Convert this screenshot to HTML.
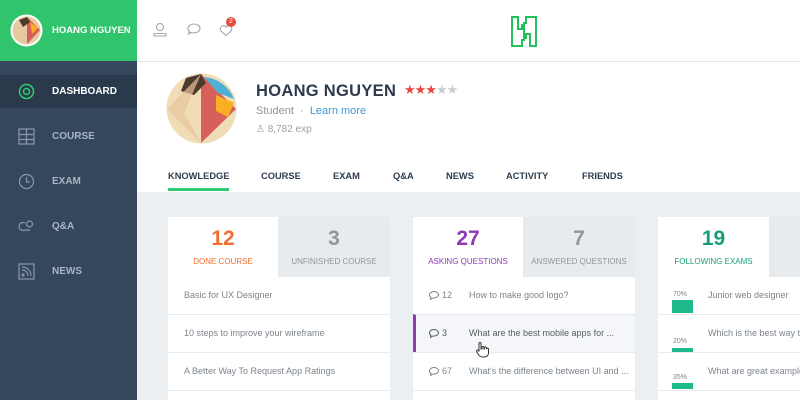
<!DOCTYPE html>
<html style="overflow:hidden;width:800px;height:400px"><head><meta charset="utf-8"><style>
*{margin:0;padding:0;box-sizing:border-box}
body{width:800px;height:400px;overflow:hidden;background:#eceff1;font-family:"Liberation Sans",sans-serif;position:relative}
.abs{position:absolute}
#side{left:0;top:0;width:137px;height:400px;background:#34475d}
#sh{left:0;top:0;width:137px;height:61px;background:#30c56c}
.nav{position:absolute;left:0;width:137px;height:33px;color:#a9b4c0;font-size:10px;font-weight:bold;line-height:33px;padding-left:52px}
.nav svg{position:absolute;left:18px;top:8px}
#top{left:137px;top:0;width:663px;height:62px;background:#fff;border-bottom:1px solid #e4e7ea}
#prof{left:137px;top:62px;width:663px;height:130px;background:#fff}
.tab{position:absolute;top:171px;font-size:9.3px;font-weight:bold;color:#2e3d4f}
.card{position:absolute;top:217px;width:222px;height:183px;background:#fff;overflow:hidden}
.th{position:absolute;top:0;height:60px;text-align:center}
.th b{display:block;font-size:21px;margin-top:10px}
.th span{display:block;font-size:8px;margin-top:6px}
.in{background:#e8ebed;color:#8e979f}
.row{position:absolute;left:0;width:100%;height:38px;border-top:1px solid #e8ebed;font-size:9px;color:#7c848c;line-height:36px;white-space:nowrap;overflow:hidden}
.last{border-bottom:1px solid #e8ebed;height:39px}
.c{display:inline-block;width:40px}
.c svg{vertical-align:-2px;margin-right:3px}
</style></head><body>
<div id="side" class="abs"></div>
<div id="sh" class="abs">
<svg class="abs" style="left:10px;top:14px" width="33" height="33" viewBox="0 0 33 33"><circle cx="16.5" cy="16.5" r="16" fill="#fff"/><circle cx="16.5" cy="16.5" r="14" fill="#e7c9a0"/><path d="M17 3 L30 16 L17 30 Z" fill="#d95a58"/><path d="M20 8 L28 14 L22 20 Z" fill="#f6b021"/><path d="M9 6 L17 3 L20 8 L13 13Z" fill="#4d3a2e"/></svg>
<div class="abs" style="left:52px;top:25px;color:#fff;font-size:9.5px;font-weight:bold">HOANG NGUYEN</div></div>
<div class="abs" style="left:0;top:75px;width:137px;height:33px;background:#2a394b"></div>
<div class="nav" style="top:75px;color:#fff"><svg width="17" height="17" viewBox="0 0 17 17"><circle cx="8.5" cy="8.5" r="7" fill="none" stroke="#2ecc71" stroke-width="1.5"/><circle cx="8.5" cy="8.5" r="3" fill="none" stroke="#2ecc71" stroke-width="1.5"/></svg>DASHBOARD</div>
<div class="nav" style="top:120px"><svg width="17" height="17" viewBox="0 0 17 17" fill="none" stroke="#8b98a7" stroke-width="1.2"><rect x="1" y="1" width="15" height="15"/><path d="M1 6.5h15M1 11.5h15M8.5 1v15"/></svg>COURSE</div>
<div class="nav" style="top:165px"><svg width="17" height="17" viewBox="0 0 17 17" fill="none" stroke="#8b98a7" stroke-width="1.2"><circle cx="8.5" cy="8.5" r="7"/><path d="M8.5 4v5h3.5"/></svg>EXAM</div>
<div class="nav" style="top:210px"><svg width="17" height="17" viewBox="0 0 17 17" fill="none" stroke="#8b98a7" stroke-width="1.2"><path d="M7 5a4 4 0 1 0 0 7h5"/><circle cx="11.5" cy="6" r="3"/></svg>Q&amp;A</div>
<div class="nav" style="top:255px"><svg width="17" height="17" viewBox="0 0 17 17" fill="none" stroke="#8b98a7" stroke-width="1.2"><rect x="1" y="1" width="15" height="15"/><path d="M4 7a6 6 0 0 1 6 6M4 4a9 9 0 0 1 9 9"/><circle cx="5" cy="12" r="1"/></svg>NEWS</div>
<div id="top" class="abs">
<svg class="abs" style="left:16px;top:22px" width="14" height="15" viewBox="0 0 14 15" fill="none" stroke="#a0a7ae" stroke-width="1.1"><circle cx="7" cy="5" r="3.5"/><path d="M1 14v-2.5h12V14z"/></svg>
<svg class="abs" style="left:50px;top:23px" width="14" height="12" viewBox="0 0 14 12" fill="none" stroke="#a0a7ae" stroke-width="1.1"><path d="M7 1c3.3 0 6 2 6 4.5S10.3 10 7 10c-1 0-2-.2-3-.5L1.5 11l1-2.4C1.5 7.7 1 6.6 1 5.5 1 3 3.7 1 7 1z"/></svg>
<svg class="abs" style="left:82px;top:23px" width="14" height="14" viewBox="0 0 14 14" fill="none" stroke="#a0a7ae" stroke-width="1.1"><path d="M7 12.5 2 8a3 3 0 0 1 5-4 3 3 0 0 1 5 4z"/></svg>
<div class="abs" style="left:89px;top:17px;width:10px;height:10px;border-radius:5px;background:#e74c3c;color:#fff;font-size:7px;text-align:center;line-height:10px">2</div>
<svg class="abs" style="left:374px;top:16px" width="26" height="31" viewBox="0 0 26 31" fill="none" stroke="#22c05a" stroke-width="2"><path d="M1 1h6v12h4v-4h2v15h-2v6H1zM25 30h-6V18h-4v4h-2V7h2V1h10z"/></svg>
</div>
<div id="prof" class="abs"></div>
<svg class="abs" style="left:166px;top:73px" width="71" height="71" viewBox="0 0 71 71"><circle cx="35.5" cy="35.5" r="35" fill="#f0dcb5"/><path d="M35 1 L70 36 L35 70 Z" fill="#d8605a"/><path d="M38 4 A35 35 0 0 1 68 26 L52 20Z" fill="#4fb1d6"/><path d="M50 22 L68 30 L62 44 L50 38Z" fill="#f6b021"/><path d="M20 5 L35 1 L40 10 L28 22 L15 18Z" fill="#4d3a2e"/><path d="M1 36 L35 1 L18 40 L35 70Z" fill="#e6c39d" opacity=".7"/></svg>
<div class="abs" style="left:256px;top:82px;font-size:16.5px;font-weight:bold;color:#2c3a4c;letter-spacing:.3px">HOANG NGUYEN</div>
<div class="abs" style="left:404px;top:82px;font-size:13px;letter-spacing:-1px"><span style="color:#e9473f">★★★</span><span style="color:#c8ccd1">★★</span></div>
<div class="abs" style="left:256px;top:105px;font-size:11px;color:#8d959d">Student &nbsp;·&nbsp; <span style="color:#3e9ad8">Learn more</span></div>
<div class="abs" style="left:256px;top:124px;font-size:10px;color:#9aa1a8">♙ 8,782 exp</div>
<div class="tab" style="left:168px">KNOWLEDGE</div>
<div class="abs" style="left:168px;top:188px;width:61px;height:3px;background:#2ecc71"></div>
<div class="tab" style="left:261px">COURSE</div>
<div class="tab" style="left:333px">EXAM</div>
<div class="tab" style="left:393px">Q&amp;A</div>
<div class="tab" style="left:446px">NEWS</div>
<div class="tab" style="left:506px">ACTIVITY</div>
<div class="tab" style="left:582px">FRIENDS</div>

<div class="card" style="left:168px">
<div class="th" style="left:0;width:110px"><b style="color:#f06f2c">12</b><span style="color:#f06f2c">DONE COURSE</span></div>
<div class="th in" style="left:110px;width:112px"><b>3</b><span>UNFINISHED COURSE</span></div>
<div class="row" style="top:60px;border:0;padding-left:16px">Basic for UX Designer</div>
<div class="row" style="top:97px;padding-left:16px">10 steps to improve your wireframe</div>
<div class="row last" style="top:135px;padding-left:16px">A Better Way To Request App Ratings</div>
</div>
<div class="card" style="left:413px">
<div class="th" style="left:0;width:110px"><b style="color:#8e3ab5">27</b><span style="color:#8e3ab5">ASKING QUESTIONS</span></div>
<div class="th in" style="left:110px;width:112px"><b>7</b><span>ANSWERED QUESTIONS</span></div>
<div class="row" style="top:60px;border:0;padding-left:16px"><span class="c"><svg width="10" height="9" viewBox="0 0 10 9" fill="none" stroke="#7c848c"><path d="M5 .5c2.5 0 4.5 1.5 4.5 3.3S7.5 7 5 7H4L1.5 8.5l.5-2C1 6 .5 5 .5 3.8.5 2 2.5.5 5 .5z"/></svg>12</span>How to make good logo?</div>
<div class="row" style="top:97px;padding-left:13px;background:#f5f6f9;border-left:3px solid #8e3ab5;color:#555d66"><span class="c"><svg width="10" height="9" viewBox="0 0 10 9" fill="none" stroke="#555d66"><path d="M5 .5c2.5 0 4.5 1.5 4.5 3.3S7.5 7 5 7H4L1.5 8.5l.5-2C1 6 .5 5 .5 3.8.5 2 2.5.5 5 .5z"/></svg>3</span>What are the best mobile apps for ...</div>
<div class="row last" style="top:135px;padding-left:16px"><span class="c"><svg width="10" height="9" viewBox="0 0 10 9" fill="none" stroke="#7c848c"><path d="M5 .5c2.5 0 4.5 1.5 4.5 3.3S7.5 7 5 7H4L1.5 8.5l.5-2C1 6 .5 5 .5 3.8.5 2 2.5.5 5 .5z"/></svg>67</span>What's the difference between UI and ...</div>
</div>
<svg class="abs" style="left:476px;top:342px" width="13" height="16" viewBox="0 0 13 16" fill="#fff" stroke="#333" stroke-width="1"><path d="M3 1.5a1 1 0 0 1 2 0V7h1V5.5a1 1 0 0 1 2 0V7h.5V6a1 1 0 0 1 2 0v1.2a1 1 0 0 1 2 0V11c0 2-1.5 4-4 4H6C4 15 3 13.5 2 12L.7 9.5a1 1 0 0 1 1.8-1L3 9.5z"/></svg>
<div class="card" style="left:658px;width:142px">
<div class="th" style="left:0;width:111px"><b style="color:#1a9e7a">19</b><span style="color:#1a9e7a">FOLLOWING EXAMS</span></div>
<div class="th in" style="left:111px;width:31px"></div>
<div class="row" style="top:60px;border:0;padding-left:50px">Junior web designer</div>
<div class="row" style="top:97px;padding-left:50px">Which is the best way to</div>
<div class="row last" style="top:135px;padding-left:50px">What are great examples</div>
</div>
<div class="abs" style="left:673px;top:291px;font-size:7px;color:#7c848c">70%</div><div class="abs" style="left:672px;top:300px;width:21px;height:13px;background:#1fba8c"></div>
<div class="abs" style="left:673px;top:338px;font-size:7px;color:#7c848c">20%</div><div class="abs" style="left:672px;top:348px;width:21px;height:4px;background:#1fba8c"></div>
<div class="abs" style="left:673px;top:374px;font-size:7px;color:#7c848c">35%</div><div class="abs" style="left:672px;top:383px;width:21px;height:6px;background:#1fba8c"></div>
</body></html>
